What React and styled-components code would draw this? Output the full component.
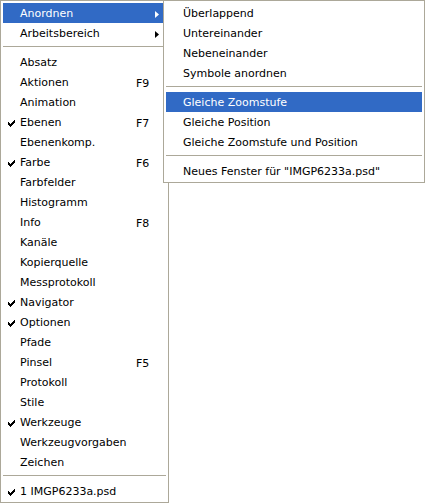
import React from "react";
import styled, { createGlobalStyle } from "styled-components";

const Global = createGlobalStyle`
  html, body {
    margin: 0;
    padding: 0;
    background: #fff;
  }
  body {
    font-family: "DejaVu Sans", Tahoma, sans-serif;
    font-size: 11px;
  }
`;

const Page = styled.div`
  position: relative;
  width: 426px;
  height: 504px;
  background: #fff;
`;

const Menu = styled.div`
  box-sizing: border-box;
  width: ${(p) => p.width}px;
  border: 1px solid #aca899;
  background: #fff;
  padding: 2px 2px 1px 2px;
  display: flex;
  flex-direction: column;
`;

const SubMenu = styled(Menu)`
  position: absolute;
  left: 163px;
  top: 0;
`;

const Row = styled.div`
  box-sizing: border-box;
  display: grid;
  grid-template-columns: 17px ${(p) => p.labelWidth || 116}px 1fr;
  align-items: center;
  height: 20px;
  padding-top: 2px;
  flex-shrink: 0;
  color: ${(p) => (p.active ? "#fff" : "#000")};
  background: ${(p) => (p.active ? "#316ac5" : "transparent")};
  white-space: nowrap;
`;

const Check = styled.span`
  display: flex;
  justify-content: center;
  padding-left: 1px;
  padding-right: 2px;
`;

const Label = styled.span`
  line-height: 18px;
`;

const Shortcut = styled.span`
  display: flex;
  align-items: center;
  justify-content: space-between;
  padding-right: 7px;
`;

const Sep = styled.div`
  height: 9px;
  flex-shrink: 0;
  display: flex;
  flex-direction: column;
  &::after {
    content: "";
    margin-top: 3px;
    height: 1px;
    background: #aca899;
  }
`;

function Tick() {
  return (
    <svg width="7" height="7" viewBox="0 0 7 7">
      <path d="M0 2h1v1h1v1h1V3h1V2h1V1h1V0h1v3H6v1H5v1H4v1H3v1H2V6H1V5H0z" fill="#000" />
    </svg>
  );
}

function Arrow({ color }) {
  return (
    <svg width="4" height="7" viewBox="0 0 4 7">
      <path d="M0 0L4 3.5L0 7z" fill={color} />
    </svg>
  );
}

const mainItems = [
  ["Absatz"],
  ["Aktionen", "F9"],
  ["Animation"],
  ["Ebenen", "F7", true],
  ["Ebenenkomp."],
  ["Farbe", "F6", true],
  ["Farbfelder"],
  ["Histogramm"],
  ["Info", "F8"],
  ["Kanäle"],
  ["Kopierquelle"],
  ["Messprotokoll"],
  ["Navigator", null, true],
  ["Optionen", null, true],
  ["Pfade"],
  ["Pinsel", "F5"],
  ["Protokoll"],
  ["Stile"],
  ["Werkzeuge", null, true],
  ["Werkzeugvorgaben"],
  ["Zeichen"],
];

const subTop = ["Überlappend", "Untereinander", "Nebeneinander", "Symbole anordnen"];
const subMid = ["Gleiche Zoomstufe", "Gleiche Position", "Gleiche Zoomstufe und Position"];

export default function App() {
  return (
    <Page>
      <Global />
      <Menu width={169}>
        <Row active>
          <Check />
          <Label>Anordnen</Label>
          <Shortcut>
            <span />
            <Arrow color="#fff" />
          </Shortcut>
        </Row>
        <Row>
          <Check />
          <Label>Arbeitsbereich</Label>
          <Shortcut>
            <span />
            <Arrow color="#000" />
          </Shortcut>
        </Row>
        <Sep />
        {mainItems.map(([label, key, checked]) => (
          <Row key={label}>
            <Check>{checked && <Tick />}</Check>
            <Label>{label}</Label>
            <Shortcut>{key}</Shortcut>
          </Row>
        ))}
        <Sep />
        <Row>
          <Check>
            <Tick />
          </Check>
          <Label>1 IMGP6233a.psd</Label>
          <Shortcut />
        </Row>
      </Menu>
      <SubMenu width={262}>
        {subTop.map((label) => (
          <Row key={label} labelWidth={220}>
            <Check />
            <Label>{label}</Label>
          </Row>
        ))}
        <Sep />
        {subMid.map((label, i) => (
          <Row key={label} labelWidth={220} active={i === 0}>
            <Check />
            <Label>{label}</Label>
          </Row>
        ))}
        <Sep />
        <Row labelWidth={220}>
          <Check />
          <Label>Neues Fenster für "IMGP6233a.psd"</Label>
        </Row>
      </SubMenu>
    </Page>
  );
}
